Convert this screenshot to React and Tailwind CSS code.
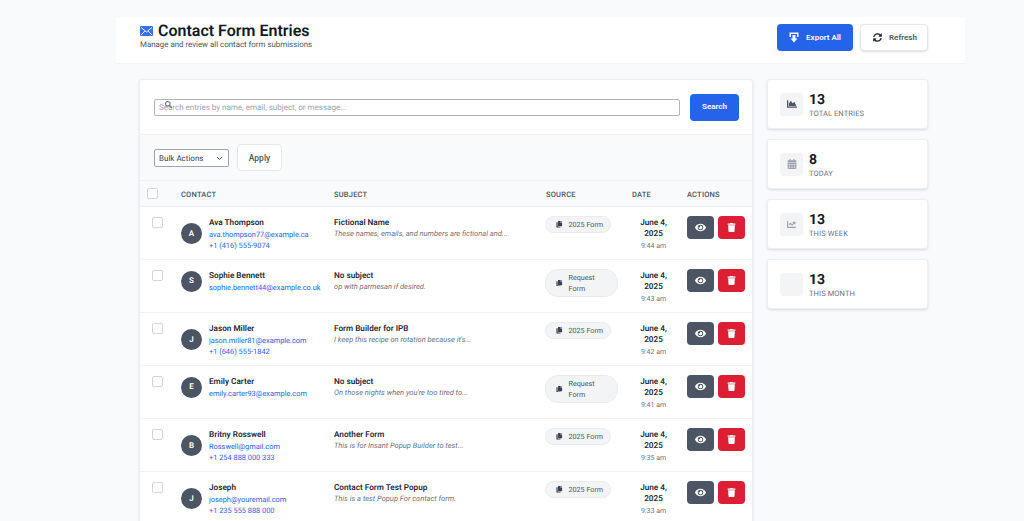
import React from "react";
import { FaEye, FaTrash, FaCopy, FaSyncAlt, FaChartArea, FaCalendarAlt, FaChartLine, FaSearch } from "react-icons/fa";

const rows = [
  { i: "A", name: "Ava Thompson", email: "ava.thompson77@example.ca", phone: "+1 (416) 555-9074", subject: "Fictional Name", msg: "These names, emails, and numbers are fictional and...", source: "2025 Form", time: "9:44 am" },
  { i: "S", name: "Sophie Bennett", email: "sophie.bennett44@example.co.uk", subject: "No subject", msg: "op with parmesan if desired.", source: "Request Form", time: "9:43 am" },
  { i: "J", name: "Jason Miller", email: "jason.miller81@example.com", phone: "+1 (646) 555-1842", subject: "Form Builder for IPB", msg: "I keep this recipe on rotation because it's...", source: "2025 Form", time: "9:42 am" },
  { i: "E", name: "Emily Carter", email: "emily.carter93@example.com", subject: "No subject", msg: "On those nights when you're too tired to...", source: "Request Form", time: "9:41 am" },
  { i: "B", name: "Britny Rosswell", email: "Rosswell@gmail.com", phone: "+1 254 888 000 333", subject: "Another Form", msg: "This is for Insant Popup Builder to test...", source: "2025 Form", time: "9:35 am" },
  { i: "J", name: "Joseph", email: "joseph@youremail.com", phone: "+1 235 555 888 000", subject: "Contact Form Test Popup", msg: "This is a test Popup For contact form.", source: "2025 Form", time: "9:33 am" },
];

const stats = [
  { n: "13", label: "TOTAL ENTRIES", icon: <FaChartArea className="text-[10px] text-[#4b5563]" /> },
  { n: "8", label: "TODAY", icon: <FaCalendarAlt className="text-[10px] text-[#9ca3af]" /> },
  { n: "13", label: "THIS WEEK", icon: <FaChartLine className="text-[9px] text-[#9ca3af]" /> },
  { n: "13", label: "THIS MONTH", icon: null },
];

const grid = "grid grid-cols-[41px_153px_212px_86px_55px_65px]";

function Check() {
  return <span className="block w-[11px] h-[11px] rounded-[2px] bg-white border border-[#d1d5db]" />;
}

function MailIcon() {
  return (
    <svg width="13" height="10" viewBox="0 0 13 10" className="shrink-0">
      <rect width="13" height="10" rx="1" fill="#3b6fe8" />
      <path d="M1 1.5l5.5 4.5L12 1.5M1 9l3.8-4M12 9L8.2 5" fill="none" stroke="#fff" strokeWidth="0.9" />
    </svg>
  );
}

function ExportIcon() {
  return (
    <svg width="10" height="11" viewBox="0 0 10 11" className="shrink-0" fill="#fff">
      <path d="M0.5 0.5h9v4.5h-1.5v-3h-6v3h-1.5z" />
      <path d="M3.5 3h3v3.5h2L5 10.5 1.5 6.5h2z" />
    </svg>
  );
}

function Row({ r }) {
  return (
    <div className={`${grid} h-[53px] border-b border-[#f0f1f3] bg-white`}>
      <div className="pl-[12px] pt-[10px]"><Check /></div>
      <div className="flex items-center gap-[7px] self-start mt-[9px]">
        <div className="w-[21px] h-[21px] rounded-full bg-[#4b5563] text-white text-[8px] font-semibold flex items-center justify-center shrink-0">{r.i}</div>
        <div className="min-w-0 pt-[1px]">
          <div className="text-[8.2px] leading-[12px] font-semibold text-[#1f2937] whitespace-nowrap">{r.name}</div>
          <div className="text-[7.4px] leading-[11px] text-[#2563eb] whitespace-nowrap">{r.email}</div>
          {r.phone && <div className="text-[7.4px] leading-[11px] text-[#2563eb] whitespace-nowrap">{r.phone}</div>}
        </div>
      </div>
      <div className="pt-[10px]">
        <div className="text-[8.2px] leading-[12px] font-semibold text-[#1f2937]">{r.subject}</div>
        <div className="text-[7.5px] leading-[11px] -mt-[1px] italic text-[#6b7280] whitespace-nowrap">{r.msg}</div>
      </div>
      <div className="pt-[9px]">
        <div className="flex items-center gap-[6px] w-fit max-w-[73px] -ml-[1px] bg-[#f3f4f6] border border-[#e9ebee] rounded-[13px] pl-[10px] pr-[7px] py-[2px]">
          <FaCopy className="text-[6.5px] text-[#374151] shrink-0" />
          <span className="text-[7.2px] leading-[11px] text-[#4b5563]">{r.source}</span>
        </div>
      </div>
      <div className="pt-[11px] pr-[12px] text-center">
        <div className="text-[8.2px] leading-[10.5px] font-semibold text-[#1f2937]">June 4, 2025</div>
        <div className="text-[7px] leading-[10px] mt-[2px] text-[#6b7280]">{r.time}</div>
      </div>
      <div className="pt-[9px] flex gap-[4px] items-start">
        <div className="w-[27px] h-[23px] rounded-[4px] bg-[#4b5563] flex items-center justify-center"><FaEye className="text-[11px] text-white" /></div>
        <div className="w-[27px] h-[23px] rounded-[4px] bg-[#dc1f32] flex items-center justify-center"><FaTrash className="text-[9px] text-white" /></div>
      </div>
    </div>
  );
}

export default function App() {
  return (
    <div className="h-[521px] overflow-hidden bg-[#f9fafb] pt-[17px] pl-[116px] font-['Roboto','Noto_Sans',sans-serif] [text-rendering:geometricPrecision]">
      <header className="w-[849px] h-[47px] bg-white flex justify-between pl-[24px] pr-[37px] pt-[7px] border-b border-[#f3f4f6]">
        <div className="-mt-[1px]">
          <div className="flex items-center gap-[5px] h-[15px]">
            <MailIcon />
            <h1 className="text-[16px] leading-[15px] font-semibold text-[#111827]">Contact Form Entries</h1>
          </div>
          <p className="text-[7.9px] leading-[11px] mt-[1px] text-[#4b5563]">Manage and review all contact form submissions</p>
        </div>
        <div className="flex gap-[7px] items-start">
          <button className="w-[76px] h-[27px] rounded-[4px] bg-[#2563eb] text-white text-[8px] font-semibold flex items-center justify-center gap-[7px]">
            <ExportIcon />Export All
          </button>
          <button className="w-[68px] h-[27px] rounded-[4px] bg-white border border-[#e5e7eb] text-[#4b5563] text-[8px] font-semibold flex items-center justify-center gap-[7px] pl-[2px] shadow-sm">
            <FaSyncAlt className="text-[9px] text-[#1f2937]" />Refresh
          </button>
        </div>
      </header>
      <div className="flex gap-[14px] pl-[23px] pt-[15px] items-start">
        <main className="w-[614px] rounded-[3px] bg-white border border-[#eceef1] shadow-sm">
          <div className="h-[55px] flex items-center gap-[10px] pl-[14px] pr-[13px] border-b border-[#f0f1f3]">
            <div className="relative flex-1 h-[17px] border border-[#b3b5b9] rounded-[2px] bg-white flex items-center pl-[4px] pt-[1px]">
              <span className="text-[8px] text-[#9ca3af]">Search entries by name, email, subject, or message...</span>
              <FaSearch className="absolute left-[10px] top-[1px] text-[7px] text-[#6b7280]" />
            </div>
            <button className="w-[49px] h-[27px] rounded-[4px] bg-[#2563eb] text-white text-[8px] font-semibold">Search</button>
          </div>
          <div className="h-[46px] bg-[#f9fafb] flex items-center gap-[8px] pl-[14px] border-b border-[#f0f1f3]">
            <div className="w-[75px] h-[18px] border border-[#9ca3af] rounded-[2px] bg-white flex items-center justify-between pl-[4px] pr-[5px] pt-[2px] text-[8px] text-[#374151]">
              Bulk Actions
              <svg width="7" height="5" viewBox="0 0 7 5" fill="none" stroke="#4b5563" strokeWidth="1"><path d="M1 1l2.5 2.5L6 1" /></svg>
            </div>
            <button className="w-[45px] h-[27px] rounded-[4px] bg-white border border-[#e5e7eb] text-[#4b5563] text-[8.5px] font-medium pt-[1px]">Apply</button>
          </div>
          <div className={`${grid} h-[26px] items-center bg-[#f9fafb] border-b border-[#eceef1] text-[7.5px] font-medium tracking-[0.2px] text-[#4b5563]`}>
            <div className="pl-[7px]"><Check /></div>
            <div className="pt-[2px]">CONTACT</div>
            <div className="pt-[2px]">SUBJECT</div>
            <div className="pt-[2px]">SOURCE</div>
            <div className="pt-[2px]">DATE</div>
            <div className="pt-[2px]">ACTIONS</div>
          </div>
          {rows.map((r, k) => <Row key={k} r={r} />)}
        </main>
        <aside className="w-[161px] flex flex-col gap-[10px]">
          {stats.map((s, k) => (
            <div key={k} className="h-[50px] rounded-[3px] bg-white border border-[#eceef1] shadow-sm flex items-center gap-[6px] pl-[12px]">
              <div className="w-[23px] h-[23px] rounded-[4px] bg-[#f3f4f6] flex items-center justify-center">{s.icon}</div>
              <div className="pt-[3px]">
                <div className="text-[14px] leading-[15px] font-bold text-[#111827]">{s.n}</div>
                <div className="text-[7.5px] leading-[10px] mt-[1px] tracking-[0.1px] text-[#6b7280]">{s.label}</div>
              </div>
            </div>
          ))}
        </aside>
      </div>
    </div>
  );
}
